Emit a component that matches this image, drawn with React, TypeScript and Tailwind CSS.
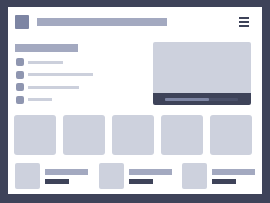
export default function App() {
  const items = [35, 65, 51, 24];
  return (
    <div className="w-[270px] h-[203px] bg-[#3e4359] pt-[7px] pl-[8px]">
      <div className="w-[254px] h-[187px] bg-white flex flex-col">
        {/* header */}
        <div className="flex items-center mt-[8px] ml-[7px] mr-[13px]">
          <div className="w-[14px] h-[14px] bg-[#7d85a3] rounded-[1px]" />
          <div className="w-[130px] h-[8px] bg-[#a3a9c0] ml-[8px]" />
          <div className="ml-auto w-[10px] flex flex-col gap-[2px]">
            <div className="h-[2px] bg-[#3e4359]" />
            <div className="h-[2px] bg-[#3e4359]" />
            <div className="h-[2px] bg-[#3e4359]" />
          </div>
        </div>

        {/* hero */}
        <div className="flex mt-[13px] pl-[7px] pr-[11px]">
          <div className="flex flex-col mt-[2px]">
            <div className="w-[63px] h-[8px] bg-[#a3a9c0]" />
            <div className="flex flex-col gap-[4.5px] mt-[6px] ml-[1px]">
              {items.map((w, i) => (
                <div key={i} className="flex items-center h-[8px]">
                  <div className="w-[8px] h-[8px] rounded-[2px] bg-[#8f96b0]" />
                  <div className="h-[3px] bg-[#ccd0dc] ml-[4px]" style={{ width: w }} />
                </div>
              ))}
            </div>
          </div>
          <div className="ml-auto w-[98px] h-[63px] rounded-[2px] overflow-hidden flex flex-col">
            <div className="flex-1 bg-[#cdd1dd]" />
            <div className="h-[12px] bg-[#3e4359] flex items-center pl-[12px]">
              <div className="w-[73px] h-[3px] bg-[#4a5069] rounded-[1px]">
                <div className="w-[44px] h-[3px] bg-[#7d85a3] rounded-[1px]" />
              </div>
            </div>
          </div>
        </div>

        {/* tiles */}
        <div className="flex gap-[7px] mt-[10px] ml-[6px]">
          {[0, 1, 2, 3, 4].map((i) => (
            <div key={i} className="w-[42px] h-[40px] rounded-[3px] bg-[#cdd1dd]" />
          ))}
        </div>

        {/* cards */}
        <div className="flex gap-[10.5px] mt-[8px] ml-[7px]">
          {[0, 1, 2].map((i) => (
            <div key={i} className="flex">
              <div className="w-[25px] h-[26px] rounded-[2px] bg-[#cdd1dd]" />
              <div className="flex flex-col ml-[5px] mt-[6px] gap-[4px]">
                <div className="w-[43px] h-[6px] bg-[#a3a9c0]" />
                <div className="w-[24px] h-[5px] bg-[#3e4359]" />
              </div>
            </div>
          ))}
        </div>
      </div>
    </div>
  );
}
